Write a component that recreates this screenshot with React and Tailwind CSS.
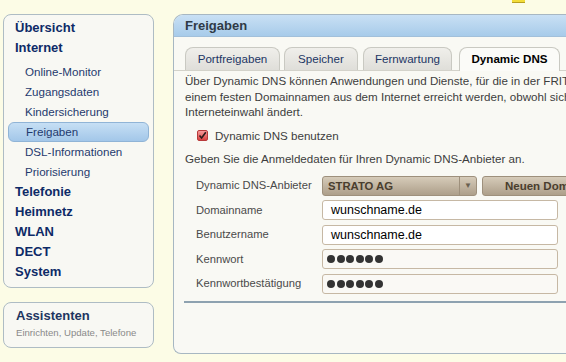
const mainNav = ['Telefonie', 'Heimnetz', 'WLAN', 'DECT', 'System']
const subNav = ['Online-Monitor', 'Zugangsdaten', 'Kindersicherung', 'Freigaben', 'DSL-Informationen', 'Priorisierung']

const tabs = [
  { label: 'Portfreigaben', cls: 'w-[95px]' },
  { label: 'Speicher', cls: 'w-[74px] ml-[4px]' },
  { label: 'Fernwartung', cls: 'w-[89px] ml-[5px]' },
  { label: 'Dynamic DNS', cls: 'w-[101px] ml-[7px]', active: true },
]

function Dots() {
  return (
    <div className="flex items-center gap-[1.5px] pl-[4px] h-full">
      {[0, 1, 2, 3, 4, 5].map((i) => (
        <div key={i} className="w-[8px] h-[8px] rounded-full bg-[#333]" />
      ))}
    </div>
  )
}

function Field({ label, children, pw }) {
  return (
    <div className="flex items-center h-[20px]">
      <div className="w-[126px] shrink-0 ml-[11px] text-[11.2px] text-[#4a4a4a]">{label}</div>
      <div
        className={`w-[236px] h-[20px] shrink-0 rounded-[3px] border border-[#c6b8a4] ${
          pw ? 'bg-[#faf9f5]' : 'bg-white'
        }`}
      >
        {children}
      </div>
    </div>
  )
}

export default function App() {
  return (
    <div className="w-[566px] h-[362px] overflow-hidden bg-[#fcfce6] flex flex-col font-['Liberation_Sans',Arial,sans-serif]">
      {/* top strip with cut logo */}
      <div className="h-[14px] shrink-0 pl-[512px]">
        <div className="w-[13px] h-[3px] bg-[#f2dc3a] border-b border-[#b8a020]" />
      </div>

      <div className="flex items-start pl-[3px]">
        {/* Left column */}
        <div className="w-[151px] shrink-0 flex flex-col">
          <nav className="h-[274px] border border-[#aebcc4] rounded-[8px] bg-[#f8f8f3] pt-[3px]">
            <div className="h-5 leading-5 pl-[11px] text-[13px] font-bold text-[#0d2a67]">Übersicht</div>
            <div className="h-5 leading-5 pl-[11px] text-[13px] font-bold text-[#0d2a67]">Internet</div>
            <div className="mt-[4px]">
              {subNav.map((s) =>
                s === 'Freigaben' ? (
                  <div
                    key={s}
                    className="h-5 mx-[4px] leading-[18px] pl-[17px] text-[11.6px] text-[#1f3a6e] rounded-[6px] border border-[#90b4d6] bg-gradient-to-b from-[#c6dff4] to-[#a3c7e9]"
                  >
                    {s}
                  </div>
                ) : (
                  <div key={s} className="h-5 leading-5 pl-[21px] text-[11.6px] text-[#1f3a6e]">
                    {s}
                  </div>
                )
              )}
            </div>
            {mainNav.map((m) => (
              <div key={m} className="h-5 leading-5 pl-[11px] text-[13px] font-bold text-[#0d2a67]">
                {m}
              </div>
            ))}
          </nav>

          <div className="mt-[14px] h-[46px] border border-[#aebcc4] rounded-[8px] bg-[#f8f8f3] pt-[4px] pl-[12px]">
            <div className="h-[18px] leading-[18px] text-[13px] font-bold text-[#1d3560]">Assistenten</div>
            <div className="h-[16px] leading-[16px] text-[9.6px] text-[#8a8a8a]">Einrichten, Update, Telefone</div>
          </div>
        </div>

        {/* Main panel */}
        <div className="ml-[19px] w-[420px] shrink-0 h-[340px] border border-r-0 border-[#a7b7c2] rounded-tl-[10px] rounded-bl-[8px] bg-[#f9f9f4] overflow-hidden flex flex-col">
          <div className="h-[22px] shrink-0 leading-[22px] pl-[11px] text-[13px] font-bold text-[#2f3a46] bg-gradient-to-b from-[#c9e0f4] to-[#a7cbea] border-b border-[#a2c0da]">
            Freigaben
          </div>

          {/* Tabs */}
          <div className="flex items-end pt-[10px] pl-[11px] border-b border-[#d3d2ca]">
            {tabs.map((t) => (
              <div
                key={t.label}
                className={`${t.cls} h-[23px] shrink-0 rounded-t-[8px] border border-b-0 border-[#c9c9c2] text-center leading-[22px] text-[11.6px] ${
                  t.active
                    ? 'bg-[#fbfbf8] font-bold text-black -mb-px h-[24px]'
                    : 'bg-gradient-to-b from-[#f0efeb] to-[#dfded9] text-[#1c3564]'
                }`}
              >
                {t.label}
              </div>
            ))}
          </div>

          {/* Content */}
          <div className="pl-[11px] whitespace-nowrap">
            <div className="pt-[2px] text-[11.6px] leading-[15.5px] text-[#3d3d3d]">
              <div>Über Dynamic DNS können Anwendungen und Dienste, für die in der FRITZ!Box Portfreigaben eingerichtet wurden,</div>
              <div>einem festen Domainnamen aus dem Internet erreicht werden, obwohl sich die öffentliche IP-Adresse</div>
              <div>Interneteinwahl ändert.</div>
            </div>

            <div className="mt-[8px] h-[16px] flex items-center ml-[12px] gap-[7px]">
              <div className="w-[11px] h-[11px] rounded-[2px] border border-[#b83a3a] bg-gradient-to-b from-[#f59a9a] to-[#d84040] flex items-center justify-center">
                <svg width="9" height="9" viewBox="0 0 9 9">
                  <path d="M1.5 4.5 L3.6 7 L7.8 1.2" fill="none" stroke="#2a1a1a" strokeWidth="1.6" />
                </svg>
              </div>
              <span className="text-[11.6px] text-[#3d3d3d]">Dynamic DNS benutzen</span>
            </div>

            <div className="mt-[7px] h-[16px] leading-[16px] text-[11.6px] text-[#3d3d3d]">
              Geben Sie die Anmeldedaten für Ihren Dynamic DNS-Anbieter an.
            </div>

            <div className="mt-[9px] flex flex-col gap-[4.5px]">
              <div className="flex items-center h-[20px]">
                <div className="w-[126px] shrink-0 ml-[11px] text-[11.2px] text-[#4a4a4a]">Dynamic DNS-Anbieter</div>
                <div className="w-[155px] h-[20px] shrink-0 flex rounded-[3px] border border-[#9e907c] bg-gradient-to-b from-[#d6cbb9] to-[#ad9f8a]">
                  <div className="flex-1 pl-[5px] leading-[18px] text-[11.3px] font-bold text-[#4a3e2e]">STRATO AG</div>
                  <div className="w-[17px] border-l border-[#9e907c] flex items-center justify-center text-[8px] text-[#6a6050]">▼</div>
                </div>
                <div className="ml-[5px] w-[140px] h-[20px] shrink-0 rounded-[3px] border border-[#9e907c] bg-gradient-to-b from-[#d6cbb9] to-[#ad9f8a] pl-[22px] leading-[18px] text-[11.5px] font-bold text-[#4a3e2e]">
                  Neuen Domainnamen
                </div>
              </div>
              <Field label="Domainname">
                <div className="pl-[8px] leading-[18px] text-[12.5px] text-black">wunschname.de</div>
              </Field>
              <Field label="Benutzername">
                <div className="pl-[8px] leading-[18px] text-[12.5px] text-black">wunschname.de</div>
              </Field>
              <Field label="Kennwort" pw>
                <Dots />
              </Field>
              <Field label="Kennwortbestätigung" pw>
                <Dots />
              </Field>
            </div>
          </div>

          <div className="mt-[7px] ml-[10px] h-[2px] bg-[#8ea2b0]" />
        </div>
      </div>
    </div>
  )
}
